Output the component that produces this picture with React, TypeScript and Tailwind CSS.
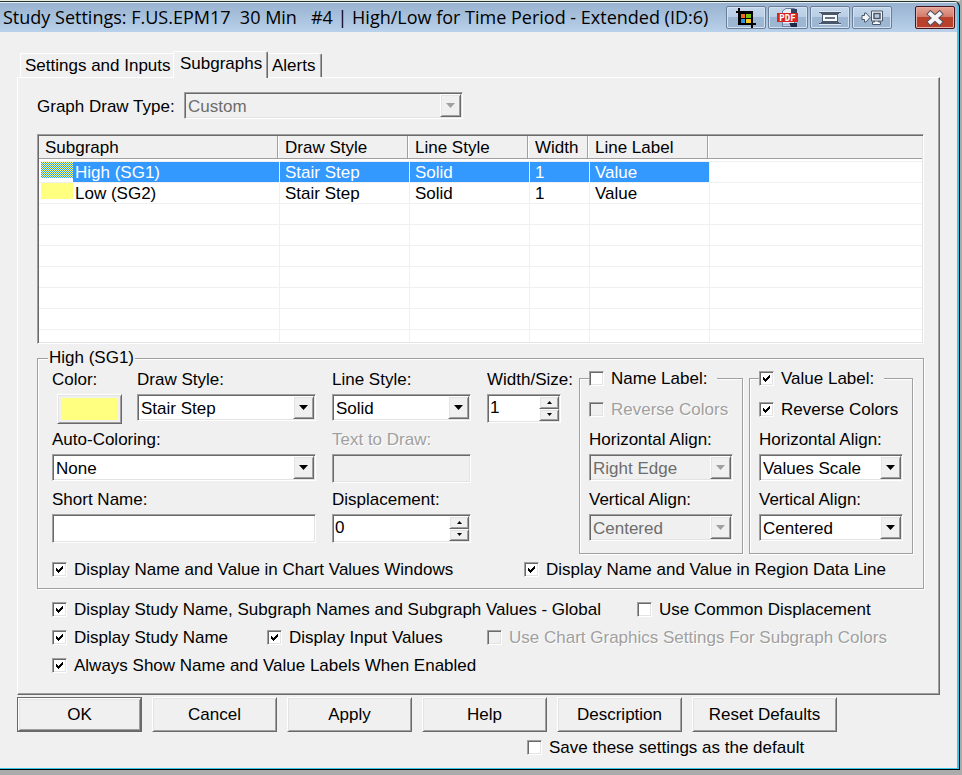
/**
 * Study settings dialog, Subgraphs tab.
 *   Title bar with capture buttons, tab strip, subgraph list,
 *   per-subgraph options, global options, action buttons.
 */

import { useId, useState, type ReactNode } from 'react'
import clsx from 'clsx'

const SUNKEN =
  'border border-t-[#a0a0a0] border-l-[#a0a0a0] border-r-white border-b-white shadow-[inset_1px_1px_0_#696969,inset_-1px_-1px_0_#e3e3e3]'
const RAISED =
  'border border-t-white border-l-white border-r-[#696969] border-b-[#696969] bg-[#f0f0f0] shadow-[inset_1px_1px_0_#e3e3e3,inset_-1px_-1px_0_#a0a0a0]'
const ETCHED = 'border border-[#a0a0a0] shadow-[1px_1px_0_#fff,inset_1px_1px_0_#fff]'
const DISABLED_TEXT = 'text-[#a0a0a0] [text-shadow:1px_1px_0_#fff]'

const subgraphs = [
  { name: 'High (SG1)', drawStyle: 'Stair Step', lineStyle: 'Solid', width: 1, label: 'Value' },
  { name: 'Low (SG2)', drawStyle: 'Stair Step', lineStyle: 'Solid', width: 1, label: 'Value' },
]

const columns = ['Subgraph', 'Draw Style', 'Line Style', 'Width', 'Line Label']

function Check({ label, checked = false, disabled = false }: { label: string; checked?: boolean; disabled?: boolean }) {
  return (
    <label className="flex h-5 items-center gap-[7px] whitespace-nowrap">
      <span className="grid size-[15px] shrink-0">
        <input
          type="checkbox"
          defaultChecked={checked}
          disabled={disabled}
          className={clsx('peer col-start-1 row-start-1 size-[15px] appearance-none', SUNKEN, disabled ? 'bg-[#f0f0f0]' : 'bg-white')}
        />
        <svg viewBox="0 0 15 15" className="pointer-events-none invisible col-start-1 row-start-1 size-[15px] peer-checked:visible" shapeRendering="crispEdges" aria-hidden="true">
          <path d="M4 6h1v3h-1zM5 7h1v3h-1zM6 8h1v3h-1zM7 7h1v3h-1zM8 6h1v3h-1zM9 5h1v3h-1zM10 4h1v3h-1z" />
        </svg>
      </span>
      <span className={clsx('pt-[2px]', disabled && DISABLED_TEXT)}>{label}</span>
    </label>
  )
}

function Combo({ id, value, disabled = false }: { id: string; value: string; disabled?: boolean }) {
  return (
    <div className={clsx('grid h-[27px] w-full p-px', SUNKEN, disabled ? 'bg-[#f0f0f0]' : 'bg-white')}>
      <select
        id={id}
        disabled={disabled}
        className={clsx('col-start-1 row-start-1 w-full appearance-none bg-transparent pt-[2px] pl-[2px] opacity-100 outline-none', disabled ? 'text-[#6d6d6d]' : 'text-black')}
      >
        <option>{value}</option>
      </select>
      <span className={clsx('pointer-events-none col-start-1 row-start-1 flex w-[21px] items-center justify-center justify-self-end', RAISED)}>
        <svg width="9" height="5" viewBox="0 0 9 5" fill={disabled ? '#a0a0a0' : '#000'} aria-hidden="true">
          <path d="M0 0h9L4.500 5z" />
        </svg>
      </span>
    </div>
  )
}

function Spin({ id, value }: { id: string; value: number }) {
  const [n, setN] = useState(value)
  return (
    <div className={clsx('flex h-[29px] bg-white p-px', SUNKEN)}>
      <input
        id={id}
        type="text"
        inputMode="numeric"
        value={n}
        onChange={(e) => setN(Number(e.target.value) || 0)}
        className="min-w-0 flex-1 bg-transparent pb-[2px] pl-px outline-none"
      />
      <div className="flex w-5 shrink-0 flex-col">
        <button type="button" aria-label="Increase" onClick={() => setN(n + 1)} className={clsx('flex flex-1 items-center justify-center', RAISED)}>
          <svg width="5" height="3" viewBox="0 0 5 3" aria-hidden="true">
            <path d="M0 3h5L2.500 0z" />
          </svg>
        </button>
        <button type="button" aria-label="Decrease" onClick={() => setN(n - 1)} className={clsx('flex flex-1 items-center justify-center', RAISED)}>
          <svg width="5" height="3" viewBox="0 0 5 3" aria-hidden="true">
            <path d="M0 0h5L2.500 3z" />
          </svg>
        </button>
      </div>
    </div>
  )
}

function Field({ label, disabled = false, children }: { label: string; disabled?: boolean; children: (id: string) => ReactNode }) {
  const id = useId()
  return (
    <div className="flex h-15 flex-col gap-1">
      <label htmlFor={id} className={clsx('h-5 whitespace-nowrap', disabled && DISABLED_TEXT)}>
        {label}
      </label>
      {children(id)}
    </div>
  )
}

function LabelGroup({ title, enabled, horizontal, vertical }: { title: string; enabled: boolean; horizontal: string; vertical: string }) {
  return (
    <fieldset className={clsx('w-[164px] shrink-0 px-[9px] pb-[3px]', ETCHED)}>
      <legend className="bg-[#f0f0f0] pr-[10px]">
        <Check label={title} checked={enabled} />
      </legend>
      <div className="pt-[11px] pb-[11px]">
        <Check label="Reverse Colors" checked={enabled} disabled={!enabled} />
      </div>
      <Field label="Horizontal Align:">{(id) => <Combo id={id} value={horizontal} disabled={!enabled} />}</Field>
      <Field label="Vertical Align:">{(id) => <Combo id={id} value={vertical} disabled={!enabled} />}</Field>
    </fieldset>
  )
}

function TitleButton({ label, children }: { label: string; children: ReactNode }) {
  return (
    <button
      type="button"
      aria-label={label}
      className="flex h-[23px] w-10 shrink-0 items-center justify-center rounded-[2px] border border-[#6a7e98] bg-linear-to-b from-[#c3d6ea] from-0% via-[#b9cee5] via-50% to-[#b0c9e4] shadow-[inset_0_0_0_1px_#d3e1f0,inset_0_-11px_0_#9db6d2]"
    >
      {children}
    </button>
  )
}

function TitleBar() {
  return (
    <header className="flex h-[29px] items-center bg-linear-to-b from-[#98b2d0] to-[#b9d1ea] pr-[2px] pl-[3px]">
      <h1 className="flex-1 overflow-hidden font-['Open_Sans','Noto_Sans',sans-serif] text-[18px] leading-[29px] whitespace-pre">
        {'Study Settings: F.US.EPM17  30 Min   #4 | High/Low for Time Period - Extended (ID:6)'}
      </h1>
      <div className="flex shrink-0 gap-[2px]">
        <TitleButton label="Capture">
          <svg width="22" height="20" viewBox="0 0 22 20" shapeRendering="crispEdges" aria-hidden="true">
            <path d="M3 0h2v3h13v12h3v2h-3v3h-2v-3H3V5H1V3h2z" />
            <path fill="#f26a1b" d="M6 6h4v4H6z" />
            <path fill="#7cc010" d="M11 6h5v4h-5z" />
            <path fill="#2a94e8" d="M6 11h4v4H6z" />
            <path fill="#fbc81c" d="M11 11h5v4h-5z" />
          </svg>
        </TitleButton>
        <TitleButton label="Save as PDF">
          <svg width="22" height="20" viewBox="0 0 22 20" aria-hidden="true">
            <path d="M5.500 5V3L9 .5h8.500v18h-12z" fill="#e7edf7" stroke="#6c7da0" />
            <path d="M14 1h6v5h-6z" fill="#33415f" />
            <path d="M12 15h8v4h-6z" fill="#1d2747" />
            <path d="M6 15.500h7v2H6z" fill="#9fb2d6" />
            <path d="M0 5h21v9H0z" fill="#d9231f" />
            <text x="10.500" y="12.500" textAnchor="middle" fontSize="9" fontWeight="700" fontFamily="DejaVu Sans Mono, monospace" fill="#fff">PDF</text>
          </svg>
        </TitleButton>
        <TitleButton label="Roll up">
          <svg width="22" height="14" viewBox="0 0 22 14" shapeRendering="crispEdges" aria-hidden="true">
            <path d="M0 1h22v1h-2v1h-1v8h1v1h2v1H0v-1h2v-1h1V3H2V2H0z" fill="#4a566a" />
            <path d="M0 0h22v1H0zM0 13h22v1H0z" fill="#dfe8f1" />
            <path d="M4 4h14v6H4z" fill="#fafbfc" />
            <path d="M6 6h10v2H6z" fill="#66738a" />
          </svg>
        </TitleButton>
        <TitleButton label="Move to monitor">
          <svg width="22" height="15" viewBox="0 0 22 15" aria-hidden="true">
            <path d="M1 5.500h2.500V3H5l4 4.500L5 12H3.500V9.500H1z" fill="#f4f6f9" stroke="#4a566a" strokeLinejoin="round" />
            <path d="M13.500 10h4v2h2v2.500h-8V12h2z" fill="#f4f6f9" stroke="#4a566a" />
            <path d="M10.500 1h11v10h-11z" fill="#f4f6f9" stroke="#4a566a" />
            <path d="M13 3.500h6v5h-6z" fill="#b9cbe0" stroke="#4a566a" strokeWidth="1.500" />
          </svg>
        </TitleButton>
      </div>
      <button
        type="button"
        aria-label="Close"
        className="ml-[23px] flex h-[23px] w-10 shrink-0 items-center justify-center rounded-[2px] border border-[#45141c] bg-linear-to-b from-[#e6a597] from-0% via-[#d37c6b] via-45% to-[#c9604a] shadow-[inset_0_0_0_1px_#e8b0a4,inset_0_-11px_0_#b9402a]"
      >
        <svg width="18" height="16" viewBox="0 0 18 16" fill="none" strokeLinecap="square" aria-hidden="true">
          <path d="M4.500 4l9 8M13.500 4l-9 8" stroke="#53505f" strokeWidth="6" />
          <path d="M4.500 4l9 8M13.500 4l-9 8" stroke="#f6f6f8" strokeWidth="4" />
        </svg>
      </button>
    </header>
  )
}

function SubgraphList() {
  const [selected, setSelected] = useState(0)
  const line = 'border-r border-b border-[#f0f0f0]'
  return (
    <div className={clsx('bg-white p-px', SUNKEN)}>
      <table className="w-full table-fixed border-separate border-spacing-0 text-left leading-5">
        <colgroup>
          <col className="w-[241px]" />
          <col className="w-[130px]" />
          <col className="w-[120px]" />
          <col className="w-[60px]" />
          <col className="w-[120px]" />
          <col />
        </colgroup>
        <thead>
          <tr>
            {columns.map((c, i) => (
              <th key={c} className="border-b border-[#f0f0f0] p-0 pb-[2px] font-normal">
                <div className="h-[23px] border-b border-[#a0a0a0] bg-[#f0f0f0] pr-[2px]">
                  <div className={clsx('h-full border-r border-[#a0a0a0] pt-[2px] shadow-[1px_0_0_#fff]', i === 0 ? 'pl-[6px]' : 'pl-[5px]')}>{c}</div>
                </div>
              </th>
            ))}
            <td className="border-b border-[#f0f0f0] p-0 pb-[2px]">
              <div className="h-[23px] border-b border-[#a0a0a0] bg-[#f0f0f0]" />
            </td>
          </tr>
        </thead>
        <tbody>
          {subgraphs.map((s, i) => {
            const on = i === selected
            const cell = clsx('p-0 pt-px pl-[5px] leading-[19px]', line, on && 'bg-[#3399ff] text-white')
            return (
              <tr key={s.name} className="h-[21px]" onClick={() => setSelected(i)}>
                <td className={clsx('p-0', line)}>
                  <div className="flex h-5 pl-[2px]">
                    <span
                      className={clsx(
                        'h-4 w-8 shrink-0',
                        on ? 'bg-[repeating-conic-gradient(#ffff80_0_25%,#3399ff_0_50%)] bg-[length:2px_2px]' : 'bg-[#ffff80]',
                      )}
                    />
                    <span className={clsx('flex-1 pt-px pl-[2px] leading-[19px]', on && 'bg-[#3399ff] text-white')}>{s.name}</span>
                  </div>
                </td>
                <td className={cell}>{s.drawStyle}</td>
                <td className={cell}>{s.lineStyle}</td>
                <td className={cell}>{s.width}</td>
                <td className={cell}>{s.label}</td>
                <td className="border-b border-[#f0f0f0] p-0" />
              </tr>
            )
          })}
          {[0, 1, 2, 3, 4, 5].map((r) => (
            <tr key={r} className="h-[21px]">
              {columns.map((c) => (
                <td key={c} className={clsx('p-0', line)} />
              ))}
              <td className="border-b border-[#f0f0f0] p-0" />
            </tr>
          ))}
          <tr className="h-3">
            {columns.map((c) => (
              <td key={c} className="border-r border-[#f0f0f0] p-0" />
            ))}
            <td className="p-0" />
          </tr>
        </tbody>
      </table>
    </div>
  )
}

function SubgraphOptions() {
  return (
    <fieldset className={clsx('mt-1 pr-[10px] pb-[9px] pl-[14px]', ETCHED)}>
      <legend className="-ml-1 h-5 bg-[#f0f0f0] px-px">High (SG1)</legend>
      <div className="flex">
        <div className="mr-4 min-w-0 flex-1 pt-[2px]">
          <div className="flex">
            <div className="w-[85px] shrink-0">
              <Field label="Color:">
                {(id) => (
                  <button id={id} type="button" className={clsx('ml-[5px] h-[30px] w-[65px] p-[3px]', RAISED)}>
                    <span className="block h-full bg-[#ffff80]" />
                  </button>
                )}
              </Field>
            </div>
            <div className="flex-1">
              <Field label="Draw Style:">{(id) => <Combo id={id} value="Stair Step" />}</Field>
            </div>
          </div>
          <Field label="Auto-Coloring:">{(id) => <Combo id={id} value="None" />}</Field>
          <Field label="Short Name:">
            {(id) => <input id={id} type="text" className={clsx('h-[29px] w-full bg-white px-1 outline-none', SUNKEN)} />}
          </Field>
        </div>
        <div className="mr-4 w-[139px] shrink-0 pt-[2px]">
          <Field label="Line Style:">{(id) => <Combo id={id} value="Solid" />}</Field>
          <Field label="Text to Draw:" disabled>
            {(id) => <input id={id} type="text" disabled className={clsx('h-[29px] w-full bg-[#f0f0f0] px-1', SUNKEN)} />}
          </Field>
          <Field label="Displacement:">{(id) => <Spin id={id} value={0} />}</Field>
        </div>
        <div className="mr-[6px] w-[86px] shrink-0 pt-[2px]">
          <Field label="Width/Size:">
            {(id) => (
              <div className="w-[74px]">
                <Spin id={id} value={1} />
              </div>
            )}
          </Field>
        </div>
        <div className="flex shrink-0 gap-[6px]">
          <LabelGroup title="Name Label:" enabled={false} horizontal="Right Edge" vertical="Centered" />
          <LabelGroup title="Value Label:" enabled horizontal="Values Scale" vertical="Centered" />
        </div>
      </div>
      <div className="grid grid-cols-[472px_1fr] pt-[5px]">
        <Check label="Display Name and Value in Chart Values Windows" checked />
        <Check label="Display Name and Value in Region Data Line" checked />
      </div>
    </fieldset>
  )
}

export default function App() {
  return (
    <div className="min-h-screen bg-[#ababab] pr-[2px] pb-[5px] font-['Liberation_Sans',Arial,sans-serif] text-[17px] leading-5 text-black">
      <div className="h-px bg-[#e9eee4]" />
      <div className="overflow-hidden rounded-tr-[6px] border-t border-r border-b border-t-[#26332f] border-r-black border-b-black bg-[#3cc6ea] pr-[2px] pb-px">
        <div className="border-t border-[#e6eff5] bg-[#f0f0f0]">
          <TitleBar />
          <main className="px-[17px] pb-[11px]">
            <div role="tablist" className="flex items-end pt-[19px] pl-[3px]">
              <button type="button" role="tab" aria-selected="false" className="h-6 w-[153px] border-t border-l border-white pl-1 text-left whitespace-nowrap">
                Settings and Inputs
              </button>
              <button type="button" role="tab" aria-selected="true" className="relative -mb-px h-[27px] w-[95px] rounded-t-[2px] border-t border-r border-l border-t-white border-r-[#696969] border-l-white bg-[#f0f0f0] pb-[2px] pl-[6px] text-left shadow-[inset_-1px_0_0_#a0a0a0]">
                Subgraphs
              </button>
              <button type="button" role="tab" aria-selected="false" className="h-6 w-[54px] rounded-tr-[2px] border-t border-r border-t-white border-r-[#696969] pl-1 text-left shadow-[inset_-1px_0_0_#a0a0a0]">
                Alerts
              </button>
            </div>

            <div role="tabpanel" className="border border-t-white border-r-[#696969] border-b-[#696969] border-l-white pt-[14px] pr-[15px] pb-[15px] pl-[19px] shadow-[inset_-1px_-1px_0_#a0a0a0]">
              <div className="flex items-center pb-[15px]">
                <label htmlFor="draw-type" className="w-[147px] pt-[3px] whitespace-nowrap">
                  Graph Draw Type:
                </label>
                <div className="w-[279px]">
                  <Combo id="draw-type" value="Custom" disabled />
                </div>
              </div>

              <SubgraphList />
              <SubgraphOptions />

              {/* options shared by every subgraph */}
              <div className="pt-[6px] pl-[15px]">
                <div className="grid h-7 grid-cols-[585px_1fr] items-center">
                  <Check label="Display Study Name, Subgraph Names and Subgraph Values - Global" checked />
                  <Check label="Use Common Displacement" />
                </div>
                <div className="grid h-7 grid-cols-[215px_220px_1fr] items-center">
                  <Check label="Display Study Name" checked />
                  <Check label="Display Input Values" checked />
                  <Check label="Use Chart Graphics Settings For Subgraph Colors" disabled />
                </div>
                <div className="flex h-7 items-center">
                  <Check label="Always Show Name and Value Labels When Enabled" checked />
                </div>
              </div>
            </div>

            <div className="mt-[2px] flex gap-[10px]">
              <button type="submit" className="h-[35px] w-[125px] border border-[#696969]">
                <span className={clsx('flex h-full items-center justify-center', RAISED)}>OK</span>
              </button>
              {['Cancel', 'Apply', 'Help', 'Description'].map((b) => (
                <button key={b} type="button" className={clsx('h-[35px] w-[125px]', RAISED)}>
                  {b}
                </button>
              ))}
              <button type="button" className={clsx('h-[35px] w-[145px]', RAISED)}>
                Reset Defaults
              </button>
            </div>
            <div className="flex pt-[5px] pl-[510px]">
              <Check label="Save these settings as the default" />
            </div>
          </main>
        </div>
      </div>
    </div>
  )
}
